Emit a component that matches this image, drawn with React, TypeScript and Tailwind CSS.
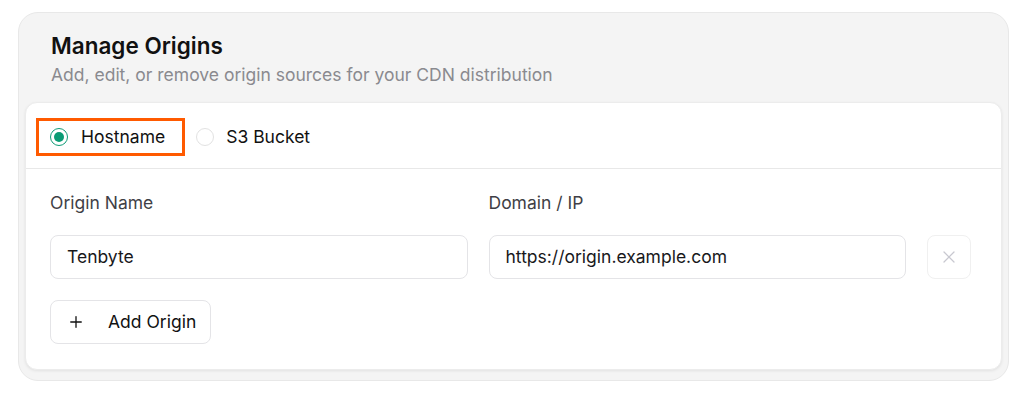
import React from 'react';
import { Plus, X } from 'lucide-react';

const App: React.FC = () => {
  return (
    <div className="min-h-[397px] bg-white pt-3 pl-[18px] pr-6 font-['Inter',sans-serif]">
      <div className="w-[991px] rounded-[20px] border border-[#e8e8e8] bg-[#f4f4f4] px-1.5 pt-1.5 pb-2.5">
        <div className="px-[26px] pt-[13px] pb-[15px]">
          <h2 className="text-[22.5px] leading-7 font-semibold text-[#111111]">Manage Origins</h2>
          <p className="mt-[3px] text-[17.5px] leading-6 text-[#8a8a8f]">
            Add, edit, or remove origin sources for your CDN distribution
          </p>
        </div>
        <div className="rounded-xl border border-[#ececec] bg-white shadow-[0_1px_3px_rgba(0,0,0,0.08)]">
          <div className="flex items-center gap-[11px] border-b border-[#e8e8e8] pt-[15px] pb-[12px] pl-[10px]">
            <label className="flex h-[38px] items-center gap-[13px] border-[3px] border-[#ff5a00] pl-[11px] pr-[17px]">
              <span className="flex h-[18px] w-[18px] items-center justify-center rounded-full border border-[#0f9b76] bg-white">
                <span className="h-[10px] w-[10px] rounded-full bg-[#0a9b74]" />
              </span>
              <span className="text-[17.5px] font-normal text-[#111111]">Hostname</span>
            </label>
            <label className="flex items-center gap-3">
              <span className="h-[18px] w-[18px] rounded-full border border-[#e2e2e2] bg-white" />
              <span className="text-[17.5px] font-normal text-[#111111]">S3 Bucket</span>
            </label>
          </div>
          <div className="pt-[22px] pb-[25px] pl-6 pr-[30px]">
            <div className="flex gap-[21px]">
              <div className="flex-1 text-[17.5px] leading-6 font-normal text-[#3f3f46]">Origin Name</div>
              <div className="flex-1 text-[17.5px] leading-6 font-normal text-[#3f3f46]">Domain / IP</div>
              <div className="w-11" />
            </div>
            <div className="mt-[20px] flex gap-[21px]">
              <div className="flex h-11 flex-1 items-center rounded-lg border border-[#e4e4e7] px-4 text-[17.5px] text-[#18181b]">
                Tenbyte
              </div>
              <div className="flex h-11 flex-1 items-center rounded-lg border border-[#e4e4e7] px-4 text-[17.5px] text-[#18181b]">
                https://origin.example.com
              </div>
              <button className="flex h-11 w-11 items-center justify-center rounded-lg border border-[#f0f0f0] bg-white text-[#c8c8d0]">
                <X size={20} strokeWidth={1.5} />
              </button>
            </div>
            <button className="mt-[21px] flex h-11 items-center gap-[23px] rounded-lg border border-[#e4e4e7] bg-white pl-4 pr-[14px] text-[17.5px] font-normal text-[#111111]">
              <Plus size={18} strokeWidth={1.75} />
              Add Origin
            </button>
          </div>
        </div>
      </div>
    </div>
  );
};

export default App;
